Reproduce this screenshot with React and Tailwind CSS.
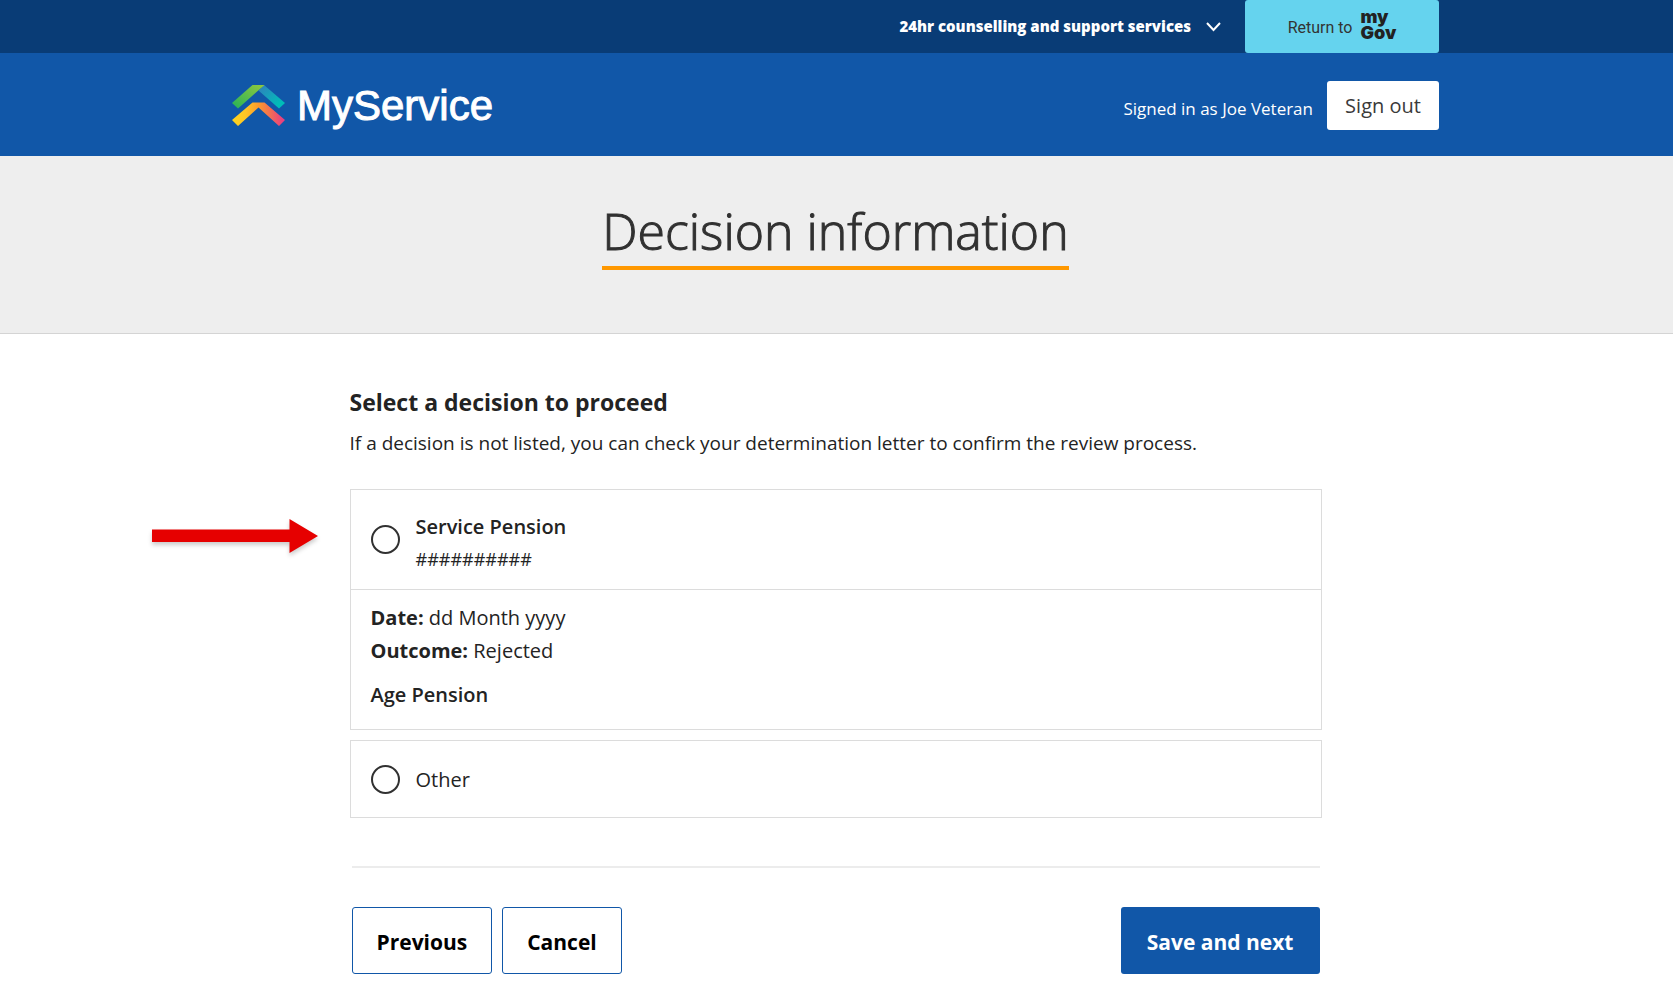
import { useState } from 'react';

const radioClassName =
  'h-[29px] w-[29px] shrink-0 cursor-pointer appearance-none rounded-full border-2 border-[#313131] bg-white checked:border-8 checked:border-[#1157a8]';
const outlineButtonClassName =
  'h-[67px] rounded-[3px] border border-[#1157a8] bg-white px-6 pt-1 text-[21px] font-bold text-black';

function ServiceMark() {
  return (
    <svg viewBox="0 0 53 41" className="h-[41px] w-[53px] shrink-0" aria-hidden="true">
      <defs>
        <linearGradient id="mark-green" x1="0" y1="1" x2="1" y2="0">
          <stop offset="0.1" stopColor="#2fb457" />
          <stop offset="1" stopColor="#92c83e" />
        </linearGradient>
        <linearGradient id="mark-teal" x1="0" y1="0" x2="1" y2="1">
          <stop offset="0.1" stopColor="#2b86bd" />
          <stop offset="0.8" stopColor="#00bdb8" />
        </linearGradient>
        <linearGradient id="mark-warm" x1="0" y1="0" x2="1" y2="0">
          <stop offset="0" stopColor="#fdd41f" />
          <stop offset="0.25" stopColor="#fdc626" />
          <stop offset="0.5" stopColor="#fb9a2c" />
          <stop offset="0.95" stopColor="#e9407f" />
        </linearGradient>
      </defs>
      <path d="M32 0 L53 18 L47 23.500 L26.500 5.500 Z" fill="url(#mark-teal)" />
      <path d="M0 18 L20.500 0 H32.500 L6 23.500 Z" fill="url(#mark-green)" />
      <path d="M0 35 L20.500 17.500 H32.500 L53 35 L47 41 L26.500 22.500 L6 41 Z" fill="url(#mark-warm)" />
    </svg>
  );
}

function PointerArrow() {
  return (
    <svg
      viewBox="0 0 166 34"
      className="absolute top-[29px] -left-[199px] h-[34px] w-[166px] overflow-visible drop-shadow-[0_3px_2px_rgba(0,0,0,0.2)]"
      aria-hidden="true"
    >
      <path d="M0 10.500 H137.500 V0 L166 17 L137.500 34 V23 H0 Z" fill="#e60000" />
    </svg>
  );
}

function TopBar() {
  return (
    <div className="bg-[#093c76]">
      <div className="mx-auto flex h-[53px] max-w-[1209px] items-center justify-end gap-6 pr-[2px]">
        <button type="button" className="flex items-center gap-[15px] text-[15px] font-extrabold text-white">
          24hr counselling and support services
          <svg viewBox="0 0 15 10" className="h-[10px] w-[15px]" fill="none" aria-hidden="true">
            <path d="M1 1 L7.500 8 L14 1" stroke="#fff" strokeWidth="2" />
          </svg>
        </button>
        <a
          href="#mygov"
          className="flex h-full w-[194px] items-center justify-center gap-2 rounded-[3px] bg-[#65d3ee] text-[#333333]"
        >
          <span className="pt-[2px] font-[Roboto,sans-serif] text-[16px]">Return to</span>
          <span className="flex flex-col pb-[3px] font-[Inter,sans-serif] text-[18px] leading-4 font-black text-[#222222]">
            <span>my</span>
            <span>Gov</span>
          </span>
        </a>
      </div>
    </div>
  );
}

function Header() {
  return (
    <header className="bg-[#1157a8]">
      <div className="mx-auto flex h-[103px] max-w-[1209px] items-center justify-between pt-[2px] pr-[2px]">
        <a
          href="#home"
          className="flex items-center gap-3 font-['Liberation_Sans',sans-serif] text-[42px] leading-[48px] text-white [-webkit-text-stroke:1px_white]"
        >
          <ServiceMark />
          MyService
        </a>
        <div className="flex items-center gap-[14px]">
          <span className="pt-[6px] text-[17px] text-white">Signed in as Joe Veteran</span>
          <button type="button" className="h-[49px] w-[112px] rounded-[3px] bg-white text-[20px] text-[#3a3a3a]">
            Sign out
          </button>
        </div>
      </div>
    </header>
  );
}

export default function App() {
  const [decision, setDecision] = useState('');

  return (
    <div className="min-h-screen bg-white font-['Open_Sans',sans-serif] text-[#232323]">
      <TopBar />
      <Header />

      <div className="flex justify-center border-b border-[#d4d4d4] bg-[#eeeeee] pt-10 pr-[2px] pb-[63px]">
        <h1 className="border-b-4 border-[#ff9800] text-[50px] leading-[70px] font-light text-[#313131] [-webkit-text-stroke:1px_#313131]">
          Decision information
        </h1>
      </div>

      <main className="mx-auto max-w-[974px] pt-[52px] pr-[2px] pb-6">
        <h2 className="text-[23px] leading-8 font-bold">Select a decision to proceed</h2>
        <p className="mt-[9px] text-[19px] leading-8">
          If a decision is not listed, you can check your determination letter to confirm the review process.
        </p>

        <form className="mt-[30px]" onSubmit={(event) => event.preventDefault()}>
          <div className="relative border border-[#dcdcdc] text-[20px]">
            <PointerArrow />
            <div className="flex h-[99px] items-center gap-4 px-5">
              <input
                id="decision-service"
                type="radio"
                name="decision"
                checked={decision === 'service'}
                onChange={() => setDecision('service')}
                className={radioClassName}
              />
              <label htmlFor="decision-service" className="pt-[6px] leading-8">
                <span className="block font-semibold">Service Pension</span>
                <span className="block text-[18px]">##########</span>
              </label>
            </div>
            <div className="border-t border-[#dcdcdc] px-5 pt-[11px] pb-[18px] leading-[33px]">
              <p>
                <strong>Date:</strong> dd Month yyyy
              </p>
              <p>
                <strong>Outcome:</strong> Rejected
              </p>
              <p className="mt-[11px] font-semibold">Age Pension</p>
            </div>
          </div>

          <div className="mt-[10px] flex h-[78px] items-center gap-4 border border-[#dcdcdc] px-5 text-[20px]">
            <input
              id="decision-other"
              type="radio"
              name="decision"
              checked={decision === 'other'}
              onChange={() => setDecision('other')}
              className={radioClassName}
            />
            <label htmlFor="decision-other" className="pt-[2px] leading-8">
              Other
            </label>
          </div>

          <div className="mx-[2px] mt-12 flex gap-[10px] border-t-2 border-[#ececec] pt-[39px]">
            <button type="button" className={outlineButtonClassName}>
              Previous
            </button>
            <button type="button" className={outlineButtonClassName}>
              Cancel
            </button>
            <button
              type="submit"
              className="ml-auto h-[67px] rounded-[3px] bg-[#1157a8] px-[26px] pt-1 text-[21px] font-bold text-white"
            >
              Save and next
            </button>
          </div>
        </form>
      </main>
    </div>
  );
}
